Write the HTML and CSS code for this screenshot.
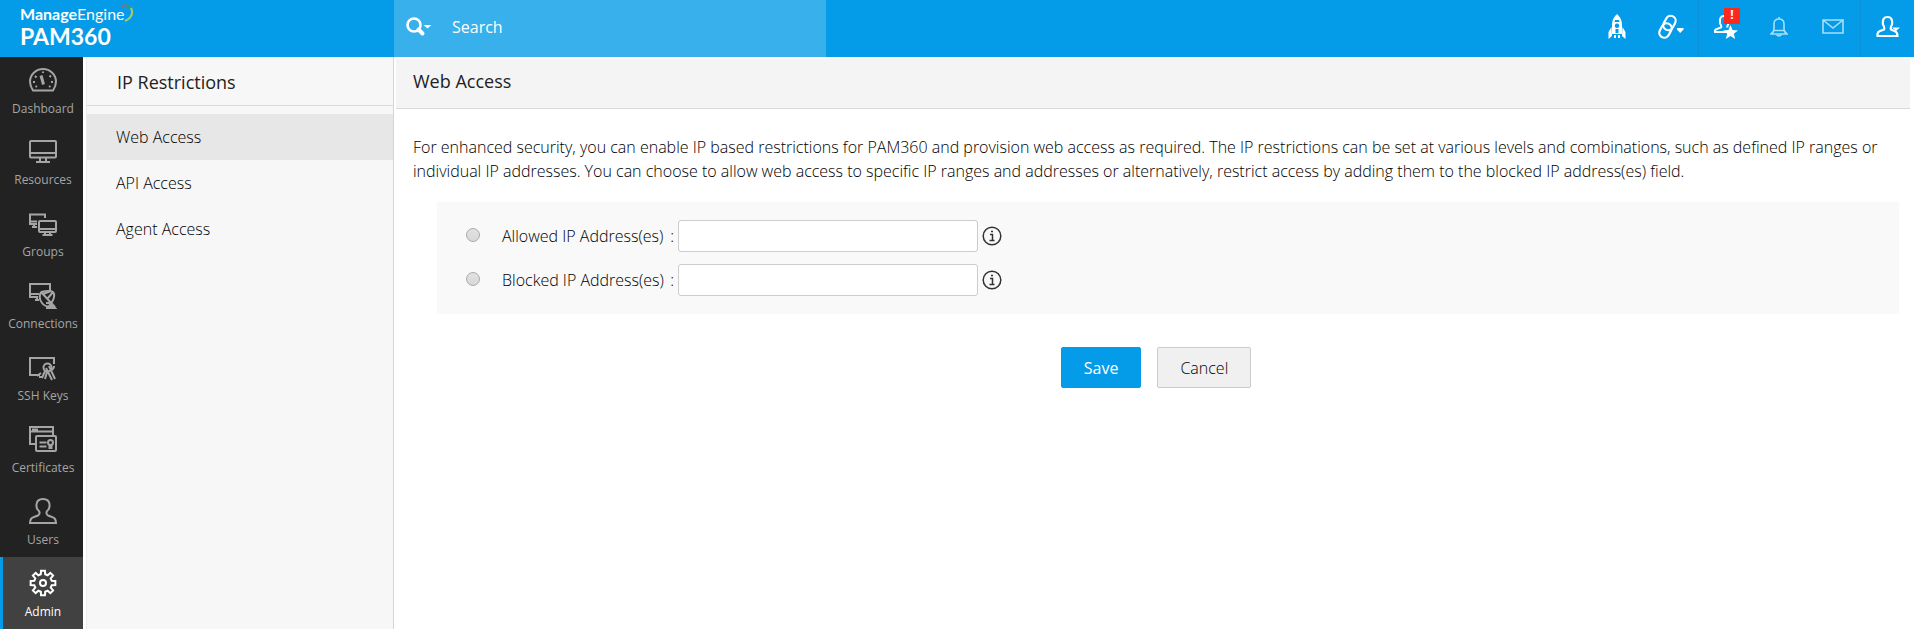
FILE: index.html
```html
<!DOCTYPE html>
<html lang="en">
<head>
<meta charset="utf-8">
<meta name="viewport" content="width=device-width, initial-scale=1.0">
<title>PAM360 - IP Restrictions</title>
<link rel="stylesheet" href="styles.css">
</head>
<body>
<header class="topbar">
	<a class="logo" href="#">
		<span class="logo-brand"><b>Manage</b>Engine<svg class="logo-arc" width="14" height="18" viewBox="0 0 14 18"><path d="M1 4Q3 0 7 2" stroke="#8a6a8a"/><path d="M6 1.500Q10 2 12 6" stroke="#3f9a6a"/><path d="M11 4Q15 12 5 17" stroke="#a9c964"/></svg></span>
		<span class="logo-product">PAM360</span>
	</a>
	<form class="search">
		<button class="search-type" type="button" aria-label="Search type">
			<svg width="26" height="20" viewBox="0 0 26 20"><circle cx="8" cy="8" r="6.500" fill="none" stroke="#fff" stroke-width="2.600"/><path d="M12.500 12.500L16.500 16.500" stroke="#fff" stroke-width="4" stroke-linecap="round"/><path d="M17.500 8h8l-4 3.500z" fill="#fff"/></svg>
		</button>
		<input class="search-box" type="text" placeholder="Search" aria-label="Search">
	</form>
	<nav class="tools">
		<a class="tool" href="#" aria-label="Quick start">
			<svg width="18" height="26" viewBox="0 0 18 26" fill="#fff"><path fill-rule="evenodd" d="M9 0Q4.500 4 4 10v10h10V10Q13.500 4 9 0zM7 6h4l.5 2h-5zM9 9.500a2.300 2.300 0 1 0 .01 0zM7.500 15h3v4h-3z"/><path d="M3.500 13L.5 18v7L4 22zM14.500 13l3 5v7L14 22zM6 21h2v3H6zM10 21h2v3h-2z"/></svg>
		</a>
		<a class="tool" href="#" aria-label="Links">
			<svg width="26" height="26" viewBox="0 0 26 26" fill="none" stroke="#fff" stroke-width="2.200"><rect x="-5" y="-7.500" width="10" height="15" rx="5" transform="translate(11.500 9) rotate(28)"/><rect x="-5" y="-7.500" width="10" height="15" rx="5" transform="translate(7.500 16.500) rotate(28)"/><path d="M19 14h6.500v1.500L22.200 19 19 15.500z" fill="#fff" stroke="none"/></svg>
		</a>
		<a class="tool tool-first" href="#" aria-label="Requests">
			<svg width="26" height="26" viewBox="0 0 26 26"><path d="M14 18H2Q1.500 15.500 4 15L8 13.500Q9 12.500 7 9.500Q6 2 11 2Q17 2 15.500 9.500Q14 12 14.500 13.500" fill="none" stroke="#fff" stroke-width="2"/><path d="M17.500 11l2 5 5.500.4-4.200 3.400 1.400 5.200-4.700-2.900-4.700 2.900 1.400-5.200-4.200-3.400 5.500-.4z" fill="#fff"/></svg>
			<span class="badge">!</span>
		</a>
		<a class="tool" href="#" aria-label="Notifications">
			<svg width="18" height="22" viewBox="0 0 18 22" fill="none" stroke="#a5e0fb" stroke-width="1.600"><path d="M9 1v2M1 18q3-2 3-5V8q0-5 5-5t5 5v5q0 3 3 5zM4 14.500h10"/><path d="M6.500 18.500q2.500 3 5 0"/></svg>
		</a>
		<a class="tool" href="#" aria-label="Mail">
			<svg width="22" height="16" viewBox="0 0 22 16" fill="none" stroke="#a5e0fb" stroke-width="1.600"><path d="M1 1h20v13H1zM1 1l10 8 10-8"/></svg>
		</a>
		<a class="tool tool-first" href="#" aria-label="Account">
			<svg width="24" height="24" viewBox="0 0 24 24"><path d="M1.500 21Q1 17 4 16L8 14.500Q9 13 7 9.500Q6 2 11.500 2T16 9.500Q14 13 15 14.500L18.500 16Q21.500 17 21.500 21Z" fill="none" stroke="#fff" stroke-width="2.200"/><path d="M16 12.500h8l-4 3.500z" fill="#fff"/></svg>
		</a>
	</nav>
</header>

<div class="page">
	<nav class="rail">
		<a class="rail-item" href="#">
			<svg class="icon" viewBox="0 0 28 28"><path d="M4 24.500Q1 20 1 15.500A13 12.500 0 0 1 27 15.500Q27 20 24 24.500Z"/><path d="M12 9.500l2.500 9" stroke-width="3"/><path d="M4 16h2M22 16h2M6 10l1.500 1.500M22 9.500L20.500 11M14 5.500V7M8 20l-1.500 1M20 20l1.500 1"/></svg>
			Dashboard
		</a>
		<a class="rail-item" href="#">
			<svg class="icon" viewBox="0 0 28 28"><rect x="1" y="4" width="26" height="16.500" rx="1"/><path d="M1 16h26M11 21v3M17 21v3M7 25h14"/></svg>
			Resources
		</a>
		<a class="rail-item" href="#">
			<svg class="icon" viewBox="0 0 28 28"><path d="M16 9V5.500H1V15h7M1 12.500h7M3 18h5M5 15v3"/><rect x="10" y="12" width="17" height="11" rx="1"/><path d="M10 20h17M16 23v2M21 23v2M13.500 26h10"/></svg>
			Groups
		</a>
		<a class="rail-item" href="#">
			<svg class="icon" viewBox="0 0 28 28"><path d="M21 9V3H1v13h8M1 13h9M6 19h4M8 16v3"/><path d="M12 11Q9 17 13 22t12 3L12 11M12 11Q24 8 25 13t-5 12M14 13l8-3M17 22h4l5 5h-9M19 17l5-6"/></svg>
			Connections
		</a>
		<a class="rail-item" href="#">
			<svg class="icon" viewBox="0 0 28 28"><path d="M25 11V5H1v17h10M8 23l4-3M10 24h4"/><circle cx="18.500" cy="14.500" r="4"/><path d="M16 18l-3 7M18 19l-2 7M20 13l6 13M17 15l6 12M22 17q3-1 3-4"/></svg>
			SSH Keys
		</a>
		<a class="rail-item" href="#">
			<svg class="icon" viewBox="0 0 28 28"><path d="M24 10V2H1v17h6M1 6.500h23M3 4.500h6"/><rect x="7" y="11" width="20" height="15" rx="1"/><path d="M10.500 17.500h7M10.500 21.500h7"/><circle cx="21.500" cy="17.500" r="2.500"/><path d="M20.500 20v4M22.500 20v4"/></svg>
			Certificates
		</a>
		<a class="rail-item" href="#">
			<svg class="icon" viewBox="0 0 28 28"><path d="M1 26Q1 21 5 20L9 18.500Q11.500 17 10 14Q7 12 7.500 7.500Q8 2 14 2T20.500 7.500Q21 12 18 14Q16.500 17 19 18.500L23 20Q27 21 27 26Z"/></svg>
			Users
		</a>
		<a class="rail-item active" href="#">
			<svg class="icon" viewBox="-14 -14 28 28"><path d="M12.350-1.960V1.960L8.730 2.180 7.710 4.640 10.110 7.350 7.350 10.110 4.640 7.710 2.180 8.730 1.960 12.350H-1.960L-2.180 8.730-4.640 7.710-7.350 10.110-10.110 7.350-7.710 4.640-8.730 2.180-12.350 1.960V-1.960L-8.730-2.180-7.710-4.640-10.110-7.350-7.350-10.110-4.640-7.710-2.180-8.730-1.960-12.350H1.960L2.180-8.730 4.640-7.710 7.350-10.110 10.110-7.350 7.710-4.640 8.730-2.180Z"/><circle r="3"/></svg>
			Admin
		</a>
	</nav>

	<aside class="submenu">
		<h2 class="submenu-title">IP Restrictions</h2>
		<ul class="submenu-list">
			<li><a class="submenu-link selected" href="#">Web Access</a></li>
			<li><a class="submenu-link" href="#">API Access</a></li>
			<li><a class="submenu-link" href="#">Agent Access</a></li>
		</ul>
	</aside>

	<main class="main">
		<h1 class="main-title">Web Access</h1>
		<form class="content">
			<p class="intro">For enhanced security, you can enable IP based restrictions for PAM360 and provision web access as required. The IP restrictions can be set at various levels and combinations, such as defined IP ranges or individual IP addresses. You can choose to allow web access to specific IP ranges and addresses or alternatively, restrict access by adding them to the blocked IP address(es) field.</p>
			<div class="options">
				<div class="option">
					<input class="radio" type="radio" name="mode" id="allowed">
					<label class="option-label" for="allowed"><span>Allowed IP Address(es)</span><span>:</span></label>
					<input class="field" type="text" aria-label="Allowed IP Address(es)">
					<svg class="info" viewBox="0 0 20 20"><circle cx="10" cy="10" r="8.800"/><path d="M8 8.500h2.500V14M7.500 14.500h5M9 5.500h2"/></svg>
				</div>
				<div class="option">
					<input class="radio" type="radio" name="mode" id="blocked">
					<label class="option-label" for="blocked"><span>Blocked IP Address(es)</span><span>:</span></label>
					<input class="field" type="text" aria-label="Blocked IP Address(es)">
					<svg class="info" viewBox="0 0 20 20"><circle cx="10" cy="10" r="8.800"/><path d="M8 8.500h2.500V14M7.500 14.500h5M9 5.500h2"/></svg>
				</div>
			</div>
			<div class="actions">
				<button class="btn btn-primary" type="submit">Save</button>
				<button class="btn" type="button">Cancel</button>
			</div>
		</form>
	</main>
</div>
</body>
</html>
```
FILE: styles.css
```css
*{box-sizing:border-box;}
body{margin:0;min-height:100vh;display:flex;flex-direction:column;font-family:"Open Sans","Noto Sans",sans-serif;font-size:16px;font-weight:300;color:#000;background:#fff;}
a{color:inherit;text-decoration:none;}
button,input{font:inherit;}

/* top bar */
.topbar{display:flex;height:57px;background:#049be8;color:#fff;font-weight:normal;}
.logo{width:394px;padding:4px 0 0 20px;font-family:Lato,sans-serif;}
.logo-brand{display:flex;font-size:16px;line-height:20px;}
.logo-arc{fill:none;stroke-width:2;margin-left:-5px;}
.logo-product{display:block;font-size:23px;line-height:24px;font-weight:bold;}
.search{display:flex;align-items:center;width:432px;padding-left:12px;background:#37b0eb;}
.search-type{display:flex;padding:0 0 4px;border:0;background:none;}
.search-box{flex:1;height:100%;margin-left:20px;padding:0 0 3px;border:0;outline:0;background:none;color:#fff;}
.search-box::placeholder{color:#fff;opacity:1;}
.tools{display:flex;margin-left:auto;}
.tool{position:relative;display:flex;align-items:center;justify-content:center;width:54px;padding-bottom:3px;}
.tool-first{border-left:1px solid #0a91d8;}
.badge{position:absolute;top:8px;right:12px;width:16px;height:16px;background:#fb2a1c;font-size:12px;font-weight:bold;line-height:14px;text-align:center;}

.page{display:flex;flex:1;}

/* left rail */
.rail{width:83px;background:#222;}
.rail-item{display:flex;flex-direction:column;align-items:center;height:72px;padding-top:12px;border-left:3px solid transparent;font-size:12px;font-weight:normal;line-height:18px;color:#a5a5a5;}
.rail-item:first-child{height:68px;padding-top:9px;}
.rail-item.active{border-left-color:#049be8;background:#414141;color:#fff;}
.icon{width:28px;height:28px;margin-bottom:6px;flex:none;fill:none;stroke:currentColor;stroke-width:2;}

/* second level menu */
.submenu{width:308px;margin-left:3px;border-left:1px solid #ececec;border-right:1px solid #d5d5d5;background:#f7f7f7;}
.submenu-title{margin:0;padding-left:30px;height:49px;border-bottom:1px solid #dadada;font-size:18px;font-weight:normal;line-height:50px;color:#222;}
.submenu-list{margin:0;padding:8px 0 0;list-style:none;}
.submenu-link{display:block;height:46px;padding-left:29px;line-height:46px;}
.submenu-link.selected{background:#e7e7e7;}

/* main area */
.main{flex:1;padding:2px 4px 0 2px;}
.main-title{margin:0;padding-left:17px;height:50px;border-bottom:1px solid #d9d9d9;background:#f4f4f4;font-size:18px;font-weight:normal;line-height:45px;color:#222;}
.content{padding:26px 11px 0 17px;}
.intro{margin:0;line-height:24px;}
.options{display:flex;flex-direction:column;gap:12px;margin:19px 0 33px 24px;padding:18px 0 18px 29px;background:#f9f9f9;}
.option{display:flex;align-items:center;}
.radio{flex:none;appearance:none;width:14px;height:14px;margin:0 22px 3px 0;border:1px solid #aaa;border-radius:50%;background:linear-gradient(#e2e2e2,#d8d8d8);}
.option-label{display:flex;justify-content:space-between;width:172px;margin-right:4px;}
.field{width:300px;height:32px;border:1px solid #ccc;border-radius:3px;background:#fff;}
.info{width:20px;height:20px;margin-left:4px;fill:none;stroke:#333;stroke-width:1.500;}
.actions{display:flex;justify-content:center;gap:16px;}
.btn{height:41px;padding:0 22px;border:1px solid #ccc;border-radius:2px;background:#f0f0f0;color:#000;line-height:36px;}
.btn-primary{border-color:#049be8;background:#049be8;color:#fff;font-weight:normal;}
```
